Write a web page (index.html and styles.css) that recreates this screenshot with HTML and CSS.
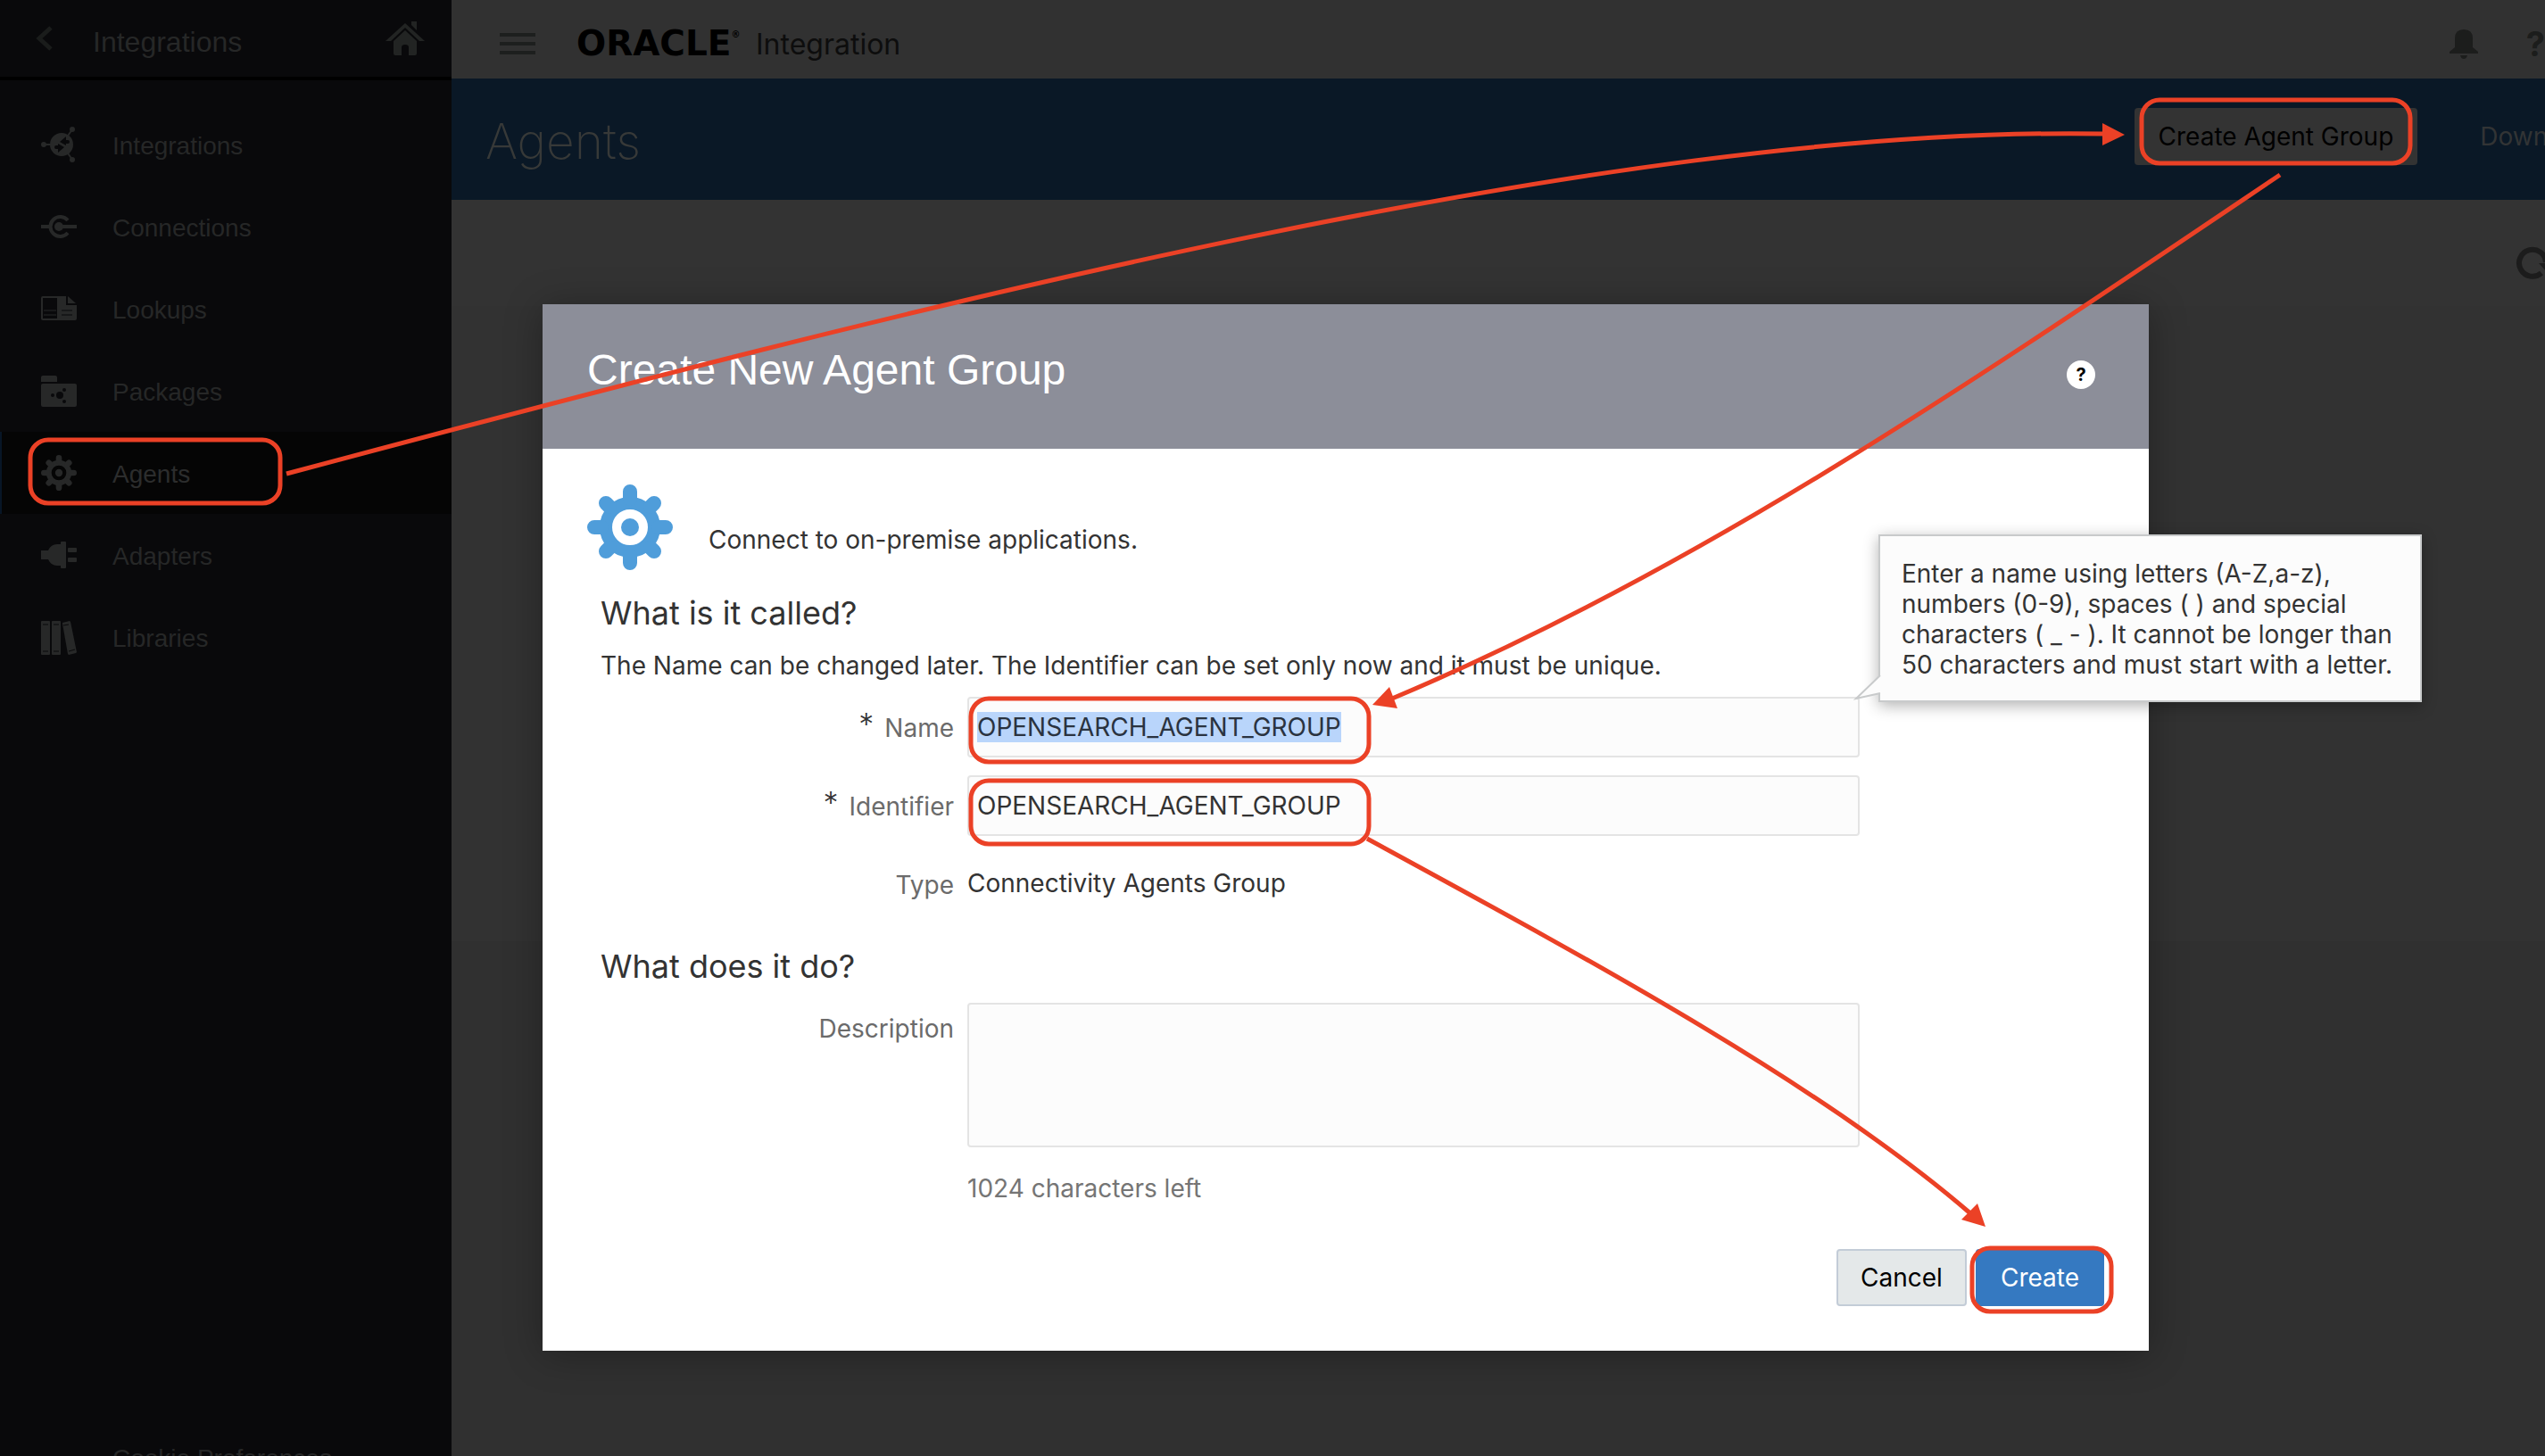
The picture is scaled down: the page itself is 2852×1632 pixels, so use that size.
FILE: index.html
```html
<!DOCTYPE html>
<html lang="en">
<head>
<meta charset="utf-8">
<title>Oracle Integration - Agents</title>
<link rel="stylesheet" href="styles.css">
</head>
<body>
<div class="app">
  <aside class="sidebar">
    <div class="sidebar-head">
      <button class="icon-button" type="button" aria-label="Back">
        <svg width="20" height="28" viewBox="0 0 20 28"><path d="M17 2 4 14l13 12" fill="none" stroke="#1a1c1b" stroke-width="5"/></svg>
      </button>
      <span class="sidebar-title">Integrations</span>
      <a class="home" href="#" aria-label="Home">
        <svg width="44" height="38" viewBox="0 0 44 38" fill="#222423"><path d="M22 2 44 22h-6L22 7 6 22H0z"/><path d="M29 0h6v10l-6-6z"/><path d="M22 10 35 22v14q0 2-2 2h-7v-9q0-3-4-3t-4 3v9h-7q-2 0-2-2V22z"/></svg>
      </a>
    </div>
    <nav class="nav">
      <a class="nav-item" href="#">
        <svg class="nav-icon" viewBox="0 0 40 40"><path d="M3 20h12M35 3l-9 13M35 37l-9-13" stroke="currentColor" stroke-width="2"/><g fill="currentColor"><circle cx="23" cy="20" r="13"/><circle cx="3" cy="20" r="3"/><circle cx="35" cy="3" r="3"/><circle cx="35" cy="37" r="3"/></g><g fill="#09090b"><path d="m21 17 7-6v4h2q2 0 2 2t-2 2h-2v2z"/><path d="m26 23-7 6v-4h-2q-2 0-2-2t2-2h2v-2z"/></g></svg>
        <span>Integrations</span>
      </a>
      <a class="nav-item" href="#">
        <svg class="nav-icon" viewBox="0 0 40 40"><g fill="none" stroke="currentColor" stroke-width="4"><path d="M30 13a11 11 0 1 0 0 14"/><path d="M0 20h9M20 20h20"/></g><circle cx="20" cy="20" r="5" fill="currentColor"/></svg>
        <span>Connections</span>
      </a>
      <a class="nav-item" href="#">
        <svg class="nav-icon" viewBox="0 0 40 40"><path d="M2 7h17v25H2q-1 0-1-1V8q0-1 1-1z" fill="none" stroke="currentColor" stroke-width="2"/><path d="M19 6h9v10h12v15q0 2-2 2H19z" fill="currentColor"/><path d="m30 6 9 8h-9z" fill="currentColor"/><path d="M3 22h14M3 27h14" stroke="currentColor" stroke-width="1"/><path d="M23 22h12M23 27h12" stroke="#09090b" stroke-width="1"/></svg>
        <span>Lookups</span>
      </a>
      <a class="nav-item" href="#">
        <svg class="nav-icon" viewBox="0 0 40 40"><g fill="currentColor"><path d="M0 10V5q0-2 2-2h14q2 0 2 2v5z"/><rect y="12" width="40" height="26" rx="2"/></g><g fill="#09090b"><circle cx="21" cy="25" r="4"/><circle cx="13" cy="25" r="2"/><circle cx="26" cy="19" r="2"/><circle cx="26" cy="32" r="2"/></g></svg>
        <span>Packages</span>
      </a>
      <a class="nav-item active" href="#" aria-current="page">
        <svg class="nav-icon" viewBox="0 0 96 96"><g fill="none" stroke="currentColor"><circle cx="48" cy="48" r="27" stroke-width="14"/><path d="M48 8v8M48 80v8M8 48h8M80 48h8M21 21l4 4M71 71l4 4M21 75l4-4M71 25l4-4" stroke-width="16" stroke-linecap="round"/></g><circle cx="48" cy="48" r="10" fill="currentColor"/></svg>
        <span>Agents</span>
      </a>
      <a class="nav-item" href="#">
        <svg class="nav-icon" viewBox="0 0 40 40" fill="currentColor"><path d="M0 15h8q3-7 10-7h4V6q0-1 1-1h4q1 0 1 1v28q0 1-1 1h-4q-1 0-1-1v-2h-4q-7 0-10-7H0z"/><rect x="30" y="12" width="10" height="5" rx="1"/><rect x="30" y="23" width="10" height="5" rx="1"/></svg>
        <span>Adapters</span>
      </a>
      <a class="nav-item" href="#">
        <svg class="nav-icon" viewBox="0 0 40 40"><g fill="currentColor"><rect y="2" width="10" height="38" rx="1"/><rect x="12" y="2" width="10" height="38" rx="1"/><path d="m24 4 8-2 1 1 7 34-1 1-8 2-1-1-6-34z"/></g><path d="M2 6h6M2 36h6M14 6h6M14 36h6M25 7l6-1M31 36l7-2" stroke="#09090b" stroke-width="1"/></svg>
        <span>Libraries</span>
      </a>
    </nav>
    <a class="cookie-link" href="#">Cookie Preferences</a>
  </aside>

  <main class="main">
    <header class="topbar">
      <button class="icon-button" type="button" aria-label="Menu">
        <svg width="40" height="24" viewBox="0 0 40 24"><path d="M0 2h40M0 12h40M0 22h40" stroke="#1d1f1e" stroke-width="4"/></svg>
      </button>
      <span class="brand">ORACLE<sup>®</sup></span>
      <span class="product">Integration</span>
      <div class="top-actions">
        <button class="icon-button" type="button" aria-label="Notifications">
          <svg width="32" height="32" viewBox="0 0 32 32" fill="#1c1d1c"><path d="M6 20V10Q6 0 16 0t10 10v10l6 5v2H0v-2z"/><path d="M12 29h8q-1 4-4 4t-4-4z"/></svg>
        </button>
        <button class="icon-button help" type="button" aria-label="Help">?</button>
      </div>
    </header>
    <div class="title-band">
      <h1>Agents</h1>
      <div class="band-actions">
        <button class="btn-dim" type="button">Create Agent Group</button>
        <button class="btn-link" type="button">Download</button>
      </div>
    </div>
    <div class="toolbar">
      <button class="icon-button" type="button" aria-label="Refresh">
        <svg width="40" height="40" viewBox="0 0 40 40"><path d="M28 32a15 15 0 1 1 5-12" fill="none" stroke="#1c1c1c" stroke-width="6"/><path d="M25 21h14l-5 10z" fill="#1c1c1c"/></svg>
      </button>
    </div>
    <div class="list"></div>
  </main>

  <div class="overlay">
    <section class="dialog" role="dialog" aria-labelledby="dialog-title">
      <header class="dialog-head">
        <h2 id="dialog-title">Create New Agent Group</h2>
        <button class="help-round" type="button" aria-label="Help">?</button>
      </header>
      <form class="dialog-body">
        <div class="intro">
          <svg width="96" height="96" viewBox="0 0 96 96"><g fill="none" stroke="#4f9dda"><circle cx="48" cy="48" r="27" stroke-width="14"/><path d="M48 8v8M48 80v8M8 48h8M80 48h8M21 21l4 4M71 71l4 4M21 75l4-4M71 25l4-4" stroke-width="16" stroke-linecap="round"/></g><circle cx="48" cy="48" r="10" fill="#4f9dda"/></svg>
          <p>Connect to on-premise applications.</p>
        </div>
        <h3>What is it called?</h3>
        <p class="note">The Name can be changed later. The Identifier can be set only now and it must be unique.</p>
        <div class="fields">
          <label class="label" for="name"><span class="star">*</span>Name</label>
          <div class="control">
            <input id="name" type="text" value="OPENSEARCH_AGENT_GROUP" spellcheck="false">
            <div class="tooltip" role="tooltip">
              Enter a name using letters (A-Z,a-z), numbers (0-9), spaces ( ) and special characters ( _ - ). It cannot be longer than 50 characters and must start with a letter.
              <svg class="tail" width="29" height="28" viewBox="0 0 29 28"><path d="M29 0 2 26l27-6" fill="#fcfcfc" stroke="#c8cacb" stroke-width="2"/></svg>
            </div>
          </div>
          <label class="label" for="identifier"><span class="star">*</span>Identifier</label>
          <div class="control"><input id="identifier" type="text" value="OPENSEARCH_AGENT_GROUP" spellcheck="false"></div>
          <span class="label">Type</span>
          <span class="value">Connectivity Agents Group</span>
        </div>
        <h3>What does it do?</h3>
        <div class="fields description">
          <label class="label" for="description">Description</label>
          <div class="control">
            <textarea id="description"></textarea>
            <p class="hint">1024 characters left</p>
          </div>
        </div>
        <div class="actions">
          <button class="btn" type="button">Cancel</button>
          <button class="btn primary" type="button">Create</button>
        </div>
      </form>
    </section>
  </div>

  <svg class="annotations" aria-hidden="true">
    <g fill="none" stroke="#eb4126" stroke-width="5">
      <rect x="34" y="493" width="280" height="71" rx="20"/>
      <rect x="2400" y="112" width="301" height="71" rx="20"/>
      <rect x="1088" y="783" width="446" height="71" rx="20"/>
      <rect x="1088" y="875" width="446" height="71" rx="20"/>
      <rect x="2210" y="1399" width="156" height="71" rx="20"/>
      <path d="M321 531C1000 350 1800 140 2358 150"/>
      <path d="M2555 196C2200 435 1900 640 1560 783"/>
      <path d="M1532 940C1780 1075 2040 1215 2208 1360"/>
    </g>
    <g fill="#eb4126">
      <path d="m2381 151-25 12v-25z"/>
      <path d="m1538 790 19-20 9 24z"/>
      <path d="m2225 1375-27-8 18-18z"/>
    </g>
  </svg>
</div>
<script>
  document.getElementById('name').select();
</script>
</body>
</html>
```
FILE: styles.css
```css
* { box-sizing: border-box; }

body {
  margin: 0;
  overflow: hidden;
  background: #303030;
  color: #333;
  font-family: Inter, sans-serif;
  font-size: 28px;
  line-height: 34px;
}

h1, h2, h3, p { margin: 0; font-weight: 400; }

button, input, textarea { font: inherit; color: inherit; margin: 0; }

button { border: 0; padding: 0; background: none; }

a { color: inherit; text-decoration: none; }

svg { display: block; overflow: visible; flex: none; }

/* The console keeps its own width and runs on past the right edge. */
.app {
  position: relative;
  display: flex;
  width: calc(100% + 164px);
  height: calc(100vh + 20px);
}

.sidebar {
  flex: 0 0 506px;
  display: flex;
  flex-direction: column;
  background: #09090b;
  color: #262727;
  font-family: "Liberation Sans", sans-serif;
}

.sidebar-head {
  display: flex;
  align-items: center;
  height: 90px;
  padding: 0 30px 0 40px;
  border-bottom: 4px solid #000;
}

.sidebar-title { margin: 8px auto 0 44px; font-size: 32px; }

.nav { padding-top: 26px; }

.nav-item {
  display: flex;
  align-items: center;
  gap: 40px;
  height: 92px;
  padding-left: 44px;
  border-left: 2px solid transparent;
}

.nav-item span { padding-top: 3px; }

.nav-item.active { background: #050505; border-left-color: #081626; color: #2c2d2d; }

.nav-icon { width: 40px; height: 40px; color: #272828; }

.cookie-link { margin-top: auto; padding-left: 126px; }

.main { flex: 1; display: flex; flex-direction: column; min-width: 0; }

.topbar {
  display: flex;
  align-items: center;
  height: 88px;
  padding: 10px 164px 0 54px;
  background: #313131;
}

.brand {
  display: flex;
  align-items: center;
  width: 201px;
  margin-left: 46px;
  color: #000;
  font: 700 39px/36px "DejaVu Sans", sans-serif;
}

.brand sup { align-self: flex-start; font-size: 10px; line-height: 16px; }

.product { padding-top: 2px; color: #0d0d0d; font-size: 32px; }

.top-actions { display: flex; align-items: center; gap: 54px; margin-left: auto; }

.help { color: #1c1d1c; font-size: 38px; font-weight: 700; }

.title-band {
  display: flex;
  align-items: center;
  justify-content: space-between;
  height: 136px;
  padding: 0 104px 0 38px;
  background: #0a1826;
}

h1 { padding-top: 4px; color: #373938; font-size: 55px; font-weight: 200; line-height: 64px; }

.band-actions { display: flex; gap: 70px; padding-bottom: 6px; }

.btn-dim { height: 64px; padding: 0 27px; border-radius: 4px; background: #333; color: #000; }

.btn-link { color: #323435; }

.toolbar {
  display: flex;
  align-items: center;
  justify-content: flex-end;
  height: 119px;
  padding: 20px 156px 0 0;
  background: #333;
}

.list { height: 712px; background: #323232; }

.overlay {
  position: absolute;
  inset: 0;
  display: flex;
  justify-content: center;
  align-items: flex-start;
  padding-top: 341px;
}

.dialog {
  width: 1800px;
  background: #fff;
  box-shadow: 0 4px 40px rgba(0, 0, 0, .3);
}

.dialog-head {
  display: flex;
  align-items: center;
  justify-content: space-between;
  height: 162px;
  padding: 0 60px 14px 50px;
  background: #8c8e99;
}

.dialog-head h2 { color: #fff; font: 400 48px/56px "Liberation Sans", sans-serif; }

.help-round {
  width: 32px;
  height: 32px;
  margin-top: 10px;
  border-radius: 50%;
  background: #fff;
  color: #000;
  font-size: 20px;
  font-weight: 700;
  line-height: 32px;
}

.dialog-body { padding: 40px 50px 50px; }

.intro { display: flex; align-items: flex-end; gap: 40px; }

.intro p { padding-bottom: 17px; }

.dialog-body h3 { padding: 26px 0 0 15px; font-size: 36px; line-height: 44px; }

.note { padding: 20px 0 18px 15px; }

.fields {
  display: grid;
  grid-template-columns: 411px 1000px;
  column-gap: 15px;
  row-gap: 20px;
}

.label {
  display: flex;
  justify-content: flex-end;
  gap: 12px;
  padding-top: 18px;
  color: #6b6b6b;
}

.star { margin-top: -4px; color: #333; font-size: 34px; font-weight: 300; }

.value { padding-top: 16px; }

.control { position: relative; }

input, textarea {
  display: block;
  width: 100%;
  border: 2px solid #e4e4e4;
  border-radius: 4px;
  background: #fcfcfc;
  color: #333;
  outline: 0;
}

input { height: 68px; padding: 0 9px; }

input::selection { background: rgba(184, 213, 251, .99); color: #2a3340; }

textarea { height: 162px; padding: 10px; resize: none; }

.dialog-body .fields + h3 { padding-top: 52px; }

.description { padding-top: 19px; }

.description .label { padding-top: 12px; }

.hint { padding-top: 29px; color: #757575; }

.actions { display: flex; justify-content: flex-end; gap: 10px; padding-top: 51px; }

.btn {
  width: 146px;
  height: 64px;
  border: 2px solid #c3ccd7;
  border-radius: 4px;
  background: #e4e8e9;
  color: #000;
}

.btn.primary { width: 144px; border-color: #3579c1; background: #3579c1; color: #fff; }

.tooltip {
  position: absolute;
  left: 1021px;
  top: -182px;
  width: 609px;
  padding: 25px 20px 23px 24px;
  border: 2px solid #c8cacb;
  background: #fcfcfc;
  box-shadow: 0 4px 16px rgba(0, 0, 0, .3);
}

.tail { position: absolute; left: -29px; bottom: 0; }

.annotations { position: absolute; inset: 0; width: 100%; height: 100%; pointer-events: none; }
```
